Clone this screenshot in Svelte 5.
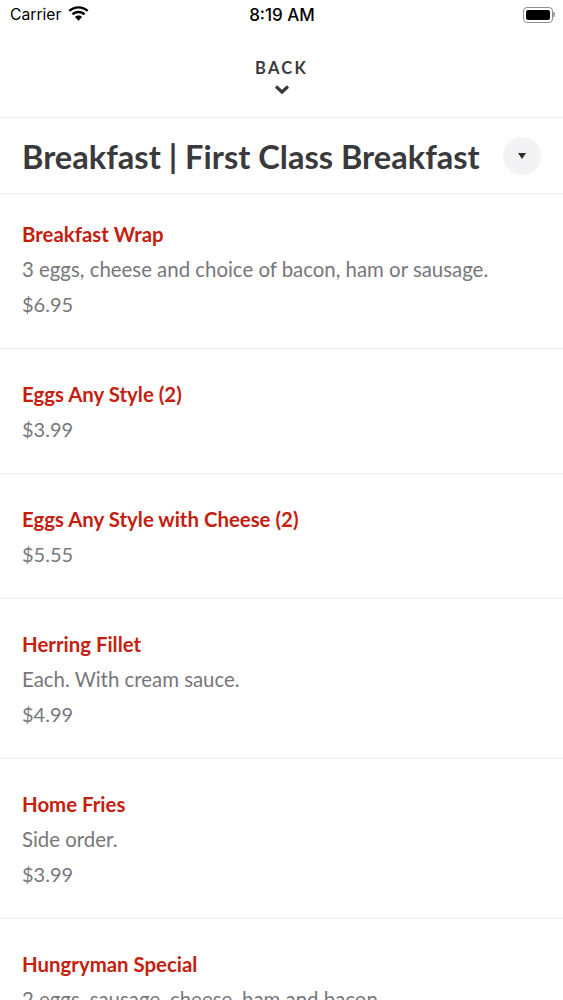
<script>
  const items = [
    { name: 'Breakfast Wrap', desc: '3 eggs, cheese and choice of bacon, ham or sausage.', price: '$6.95' },
    { name: 'Eggs Any Style (2)', price: '$3.99' },
    { name: 'Eggs Any Style with Cheese (2)', price: '$5.55' },
    { name: 'Herring Fillet', desc: 'Each. With cream sauce.', price: '$4.99' },
    { name: 'Home Fries', desc: 'Side order.', price: '$3.99' },
    { name: 'Hungryman Special', desc: '2 eggs, sausage, cheese, ham and bacon.', price: '$8.99' }
  ];
</script>

<div class="page">
  <header class="status">
    <div class="status-left">
      <span class="carrier">Carrier</span>
      <svg class="wifi" viewBox="0 0 20 15" width="21" height="16">
        <path d="M10 2.200c3.100 0 5.900 1.200 8 3.200l1.500-1.600C16.900 1.400 13.600 0 10 0S3.100 1.400.5 3.800L2 5.400c2.100-2 4.900-3.200 8-3.200z" fill="#000"/>
        <path d="M10 6.700c1.900 0 3.600.7 4.900 1.900l1.600-1.600C14.800 5.400 12.500 4.400 10 4.400S5.200 5.400 3.500 7l1.600 1.600C6.400 7.400 8.100 6.700 10 6.700z" fill="#000"/>
        <path d="M10 9c-1.300 0-2.400.5-3.300 1.300L10 14l3.300-3.700C12.400 9.500 11.300 9 10 9z" fill="#000"/>
      </svg>
    </div>
    <span class="time">8:19 AM</span>
    <div class="battery"><span class="battery-fill"></span></div>
  </header>

  <div class="back">
    <span class="back-label">BACK</span>
    <svg viewBox="0 0 16 11" width="16" height="11">
      <path d="M2 2.500 L8 8 L14 2.500" fill="none" stroke="#3a3a3c" stroke-width="3.200"/>
    </svg>
  </div>

  <div class="title-row">
    <h1>Breakfast | First Class Breakfast</h1>
    <div class="toggle"><span class="caret"></span></div>
  </div>

  <ul>
    {#each items as item}
      <li>
        <div class="name">{item.name}</div>
        {#if item.desc}<div class="line">{item.desc}</div>{/if}
        <div class="line price">{item.price}</div>
      </li>
    {/each}
  </ul>
</div>

<style>
  :global(body) {
    margin: 0;
    background: #fff;
  }
  .page {
    width: 563px;
    height: 1000px;
    overflow: hidden;
    font-family: Lato, "Noto Sans", sans-serif;
    background: #fff;
  }
  .status {
    height: 29px;
    display: grid;
    grid-template-columns: 1fr auto 1fr;
    align-items: center;
    padding: 0 9px 0 10px;
    font-family: Inter, "Liberation Sans", sans-serif;
    color: #000;
    font-size: 15.700px;
  }
  .status-left {
    display: flex;
    align-items: center;
    gap: 7px;
  }
  .wifi {
    margin-top: -2px;
  }
  .time {
    font-weight: 500;
    font-size: 17px;
  }
  .battery {
    justify-self: end;
    box-sizing: border-box;
    width: 30px;
    height: 16px;
    border: 1px solid #8e8e90;
    border-radius: 4px;
    padding: 2px;
    display: flex;
    margin-right: 1px;
    position: relative;
  }
  .battery::after {
    content: "";
    position: absolute;
    right: -3px;
    top: 4px;
    width: 2px;
    height: 5px;
    background: #a8a8aa;
    border-radius: 0 1px 1px 0;
  }
  .battery-fill {
    flex: 1;
    background: #000;
    border-radius: 2px;
  }
  .back {
    height: 88px;
    border-bottom: 1px solid #ededed;
    display: flex;
    flex-direction: column;
    align-items: center;
    color: #3a3a3c;
  }
  .back-label {
    margin-top: 29px;
    font-weight: 700;
    font-size: 16.500px;
    line-height: 20px;
    letter-spacing: 2.200px;
  }
  .back svg {
    margin-top: 6px;
  }
  .title-row {
    height: 75px;
    border-bottom: 1px solid #ededed;
    display: flex;
    align-items: center;
    justify-content: space-between;
    padding: 0 22px;
  }
  h1 {
    margin: 2px 0 0;
    font-size: 32.600px;
    font-weight: 700;
    color: #3a3a3c;
    white-space: nowrap;
  }
  .toggle {
    width: 38px;
    height: 38px;
    border-radius: 50%;
    background: #f3f2f4;
    display: flex;
    align-items: center;
    justify-content: center;
  }
  .caret {
    width: 0;
    height: 0;
    border-left: 4.500px solid transparent;
    border-right: 4.500px solid transparent;
    border-top: 6px solid #2e2e30;
  }
  ul {
    list-style: none;
    margin: 0;
    padding: 0;
  }
  li {
    padding: 28px 22px 26px;
    border-bottom: 1px solid #ededed;
  }
  li:first-child {
    padding-top: 23px;
  }
  .name {
    font-weight: 700;
    font-size: 20.400px;
    line-height: 35px;
    color: #c4200f;
    white-space: nowrap;
  }
  .line {
    font-size: 20.400px;
    line-height: 35px;
    color: #77777b;
    white-space: nowrap;
  }
  .price {
    font-size: 20px;
  }
</style>
